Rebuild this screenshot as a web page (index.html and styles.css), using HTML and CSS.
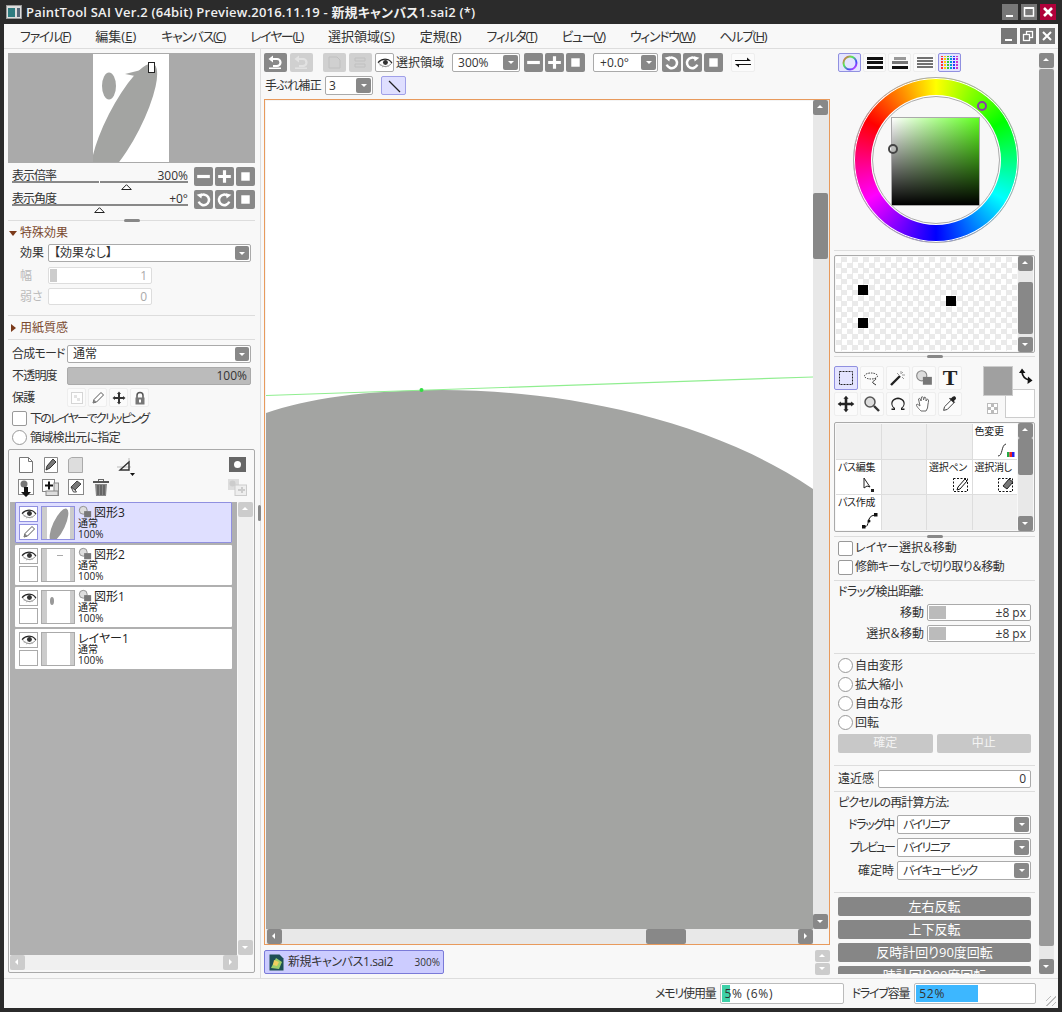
FILE: index.html
```html
<!DOCTYPE html>
<html lang="ja">
    <head>
        <meta charset="utf-8">
        <title>PaintTool SAI</title>
        <link rel="stylesheet" href="styles.css">
    </head>
    <body>
        <svg class="defs" width="0" height="0">
            <symbol id="i-minus" viewBox="0 0 18 18"><rect x="3" y="7.5" width="12" height="3" fill="#fff"/></symbol>
            <symbol id="i-plus" viewBox="0 0 18 18"><path d="M3 7.5h4.5V3h3v4.5H15v3h-4.5V15h-3v-4.5H3z" fill="#fff"/></symbol>
            <symbol id="i-stop" viewBox="0 0 18 18"><rect x="5" y="5" width="8" height="8" fill="#fff"/></symbol>
            <symbol id="i-ccw" viewBox="0 0 18 18"><path d="M6 5.5A5 5 0 1 1 4.5 11" fill="none" stroke="#fff" stroke-width="2.4"/><path d="M2.5 4.5l5-1.500-.5 5z" fill="#fff"/></symbol>
            <symbol id="i-cw" viewBox="0 0 18 18"><path d="M12 5.5A5 5 0 1 0 13.5 11" fill="none" stroke="#fff" stroke-width="2.4"/><path d="M15.500 4.500l-5-1.500.5 5z" fill="#fff"/></symbol>
            <symbol id="i-undo" viewBox="0 0 22 19"><path d="M8 6h5a3.500 3.500 0 0 1 0 7H9" fill="none" stroke="#fff" stroke-width="2.200"/><path d="M9 2.500v7L4.500 6z" fill="#fff"/><rect x="5" y="14.500" width="12" height="1.500" fill="#fff"/></symbol>
            <symbol id="i-eye" viewBox="0 0 18 16"><path d="M1.500 8C4 4.500 7 3.500 9.500 3.500S15 5 16.500 8.500C14 11 12 12 9 12S4 10.500 1.500 8z" fill="#fff" stroke="#666" stroke-width=".8"/><circle cx="9.500" cy="7.500" r="2.800" fill="#333"/><path d="M3 11l2-1.500M6 13l1-2M10 13v-1.500M13 12.500l-1-1.500" stroke="#999" stroke-width=".8"/><path d="M1 7.500C4 3.500 13 1.500 17 8" fill="none" stroke="#222" stroke-width="1.200"/></symbol>
            <symbol id="i-pencil" viewBox="0 0 16 16"><path d="M3 13l1-3.500 7-7 2.500 2.500-7 7z" fill="#fff" stroke="#555" stroke-width="1"/><path d="M3 13l1-3.500 2.500 2.500z" fill="#888"/></symbol>
            <symbol id="i-shape" viewBox="0 0 16 16"><circle cx="6" cy="6" r="4.500" fill="#ddd" stroke="#888"/><rect x="7" y="7" width="8" height="7" fill="#777"/></symbol>
            <symbol id="i-dropper" viewBox="0 0 22 22"><path d="M4 18l1-4 8-8 3 3-8 8z" fill="#fff" stroke="#333" stroke-width="1"/><path d="M12 5l2-2c2-2 5 1 3 3l-2 2 1 1-1 1-5-5 1-1z" fill="#222"/></symbol>
            <symbol id="i-thumb" viewBox="0 0 11 6"><path d="M5.500.7L10.300 5.500H.7z" fill="#fff" stroke="#222"/></symbol>
        </svg>

        <div class="titlebar">
            <svg class="app-icon" width="16" height="14" viewBox="0 0 16 14"><rect x=".5" y=".5" width="15" height="13" fill="#ddd" stroke="#999"/><rect x="2" y="3" width="7" height="9" fill="#2e7c80"/><rect x="11" y="3" width="3" height="9" fill="#567"/></svg>
            <span class="title-text">PaintTool SAI Ver.2 (64bit) Preview.2016.11.19 - 新規キャンバス1.sai2 (*)</span>
            <div class="win-buttons">
                <span class="win-btn"><svg width="16" height="16"><rect x="4" y="11" width="7" height="2" fill="#fff"/></svg></span>
                <span class="win-btn"><svg width="16" height="16"><rect x="3.500" y="4" width="9" height="8" fill="none" stroke="#fff" stroke-width="1.500"/><rect x="3" y="3" width="10" height="2" fill="#fff"/></svg></span>
                <span class="win-btn win-close"><svg width="16" height="16"><path d="M4 4l8 8M12 4l-8 8" stroke="#fff" stroke-width="2.600"/></svg></span>
            </div>
        </div>

        <div class="frame">
            <div class="menubar">
                <div class="menus">
                    <span class="kana">ファイル(<u>F</u>)</span>
                    <span>編集(<u>E</u>)</span>
                    <span class="kana">キャンバス(<u>C</u>)</span>
                    <span class="kana">レイヤー(<u>L</u>)</span>
                    <span>選択領域(<u>S</u>)</span>
                    <span>定規(<u>R</u>)</span>
                    <span class="kana">フィルタ(<u>T</u>)</span>
                    <span class="kana">ビュー(<u>V</u>)</span>
                    <span class="kana">ウィンドウ(<u>W</u>)</span>
                    <span class="kana">ヘルプ(<u>H</u>)</span>
                </div>
                <div class="mdi-buttons">
                    <span class="mdi-btn"><svg width="16" height="16"><rect x="4" y="11" width="7" height="2" fill="#fff"/></svg></span>
                    <span class="mdi-btn"><svg width="16" height="16"><rect x="6.500" y="3.500" width="6" height="6" fill="none" stroke="#fff" stroke-width="1.300"/><rect x="3.500" y="6.500" width="6" height="6" fill="#777" stroke="#fff" stroke-width="1.300"/></svg></span>
                    <span class="mdi-btn"><svg width="16" height="16"><path d="M4 4l8 8M12 4l-8 8" stroke="#fff" stroke-width="2"/></svg></span>
                </div>
            </div>

            <div class="workspace">
                <!-- Left panel -->
                <div class="left">
                    <div class="nav-preview">
                        <svg width="245" height="108" viewBox="0 0 245 108">
                            <rect width="245" height="108" fill="#aaa"/>
                            <rect x="84" width="76" height="108" fill="#fff"/>
                            <ellipse cx="100" cy="32" rx="7" ry="13.500" fill="#a3a4a2"/>
                            <clipPath id="page"><rect x="84" width="76" height="108"/></clipPath>
                            <g clip-path="url(#page)">
                                <ellipse cx="115" cy="68" rx="17" ry="65" transform="rotate(27 115 68)" fill="#a3a4a2"/>
                            </g>
                            <path d="M116 20l20-5v9z" fill="#a3a4a2"/>
                            <rect x="139.500" y="8.500" width="6" height="10" fill="#fff" stroke="#222"/>
                        </svg>
                    </div>

                    <div class="view-row">
                        <div class="slider">
                            <span class="slider-name">表示倍率</span><span>300%</span>
                            <i class="slider-notch"></i>
                            <svg class="slider-thumb thumb-zoom" width="11" height="6"><use href="#i-thumb"/></svg>
                        </div>
                        <div class="btn-group">
                            <span class="btn"><svg><use href="#i-minus"/></svg></span>
                            <span class="btn"><svg><use href="#i-plus"/></svg></span>
                            <span class="btn"><svg><use href="#i-stop"/></svg></span>
                        </div>
                    </div>
                    <div class="view-row">
                        <div class="slider">
                            <span class="slider-name">表示角度</span><span>+0°</span>
                            <svg class="slider-thumb thumb-angle" width="11" height="6"><use href="#i-thumb"/></svg>
                        </div>
                        <div class="btn-group">
                            <span class="btn"><svg><use href="#i-ccw"/></svg></span>
                            <span class="btn"><svg><use href="#i-cw"/></svg></span>
                            <span class="btn"><svg><use href="#i-stop"/></svg></span>
                        </div>
                    </div>

                    <div class="grip grip-left"></div>

                    <div class="section-title open">特殊効果</div>
                    <div class="field-row row-effect">
                        <label class="lbl-effect">効果</label>
                        <div class="select fill">【効果なし】<span class="drop"></span></div>
                    </div>
                    <div class="field-row row-disabled">
                        <label class="lbl-effect muted">幅</label>
                        <div class="spin spin-off"><i class="spin-fill"></i>1</div>
                    </div>
                    <div class="field-row row-disabled">
                        <label class="lbl-effect muted">弱さ</label>
                        <div class="spin spin-off">0</div>
                    </div>
                    <div class="sep sep-a"></div>
                    <div class="section-title closed">用紙質感</div>
                    <div class="sep sep-b"></div>

                    <div class="field-row row-blend">
                        <label class="lbl-blend">合成モード</label>
                        <div class="select fill">通常<span class="drop"></span></div>
                    </div>
                    <div class="field-row row-opacity">
                        <label class="lbl-blend">不透明度</label>
                        <div class="opacity">100%</div>
                    </div>
                    <div class="field-row row-protect">
                        <label class="lbl-blend">保護</label>
                        <div class="protect">
                            <span><svg width="12" height="12"><rect x=".5" y=".5" width="11" height="11" fill="#fff" stroke="#ccc"/><rect x="3" y="3" width="3" height="3" fill="#ddd"/><rect x="6" y="6" width="3" height="3" fill="#ddd"/></svg></span>
                            <span><svg width="16" height="16"><use href="#i-pencil"/></svg></span>
                            <span><svg width="14" height="14" viewBox="0 0 14 14"><path d="M7 .5l2 2.500H8V6h3V5l2.500 2L11 9V8H8v3h1l-2 2.500L5 11h1V8H3v1L.5 7 3 5v1h3V3H5z" fill="#333"/></svg></span>
                            <span><svg width="14" height="14" viewBox="0 0 14 14"><path d="M4 7V4.500a3 3 0 0 1 6 0V7" fill="none" stroke="#555" stroke-width="1.500"/><rect x="2.500" y="6.500" width="9" height="7" fill="#777"/><rect x="6" y="8.500" width="2" height="3" fill="#fff"/></svg></span>
                        </div>
                    </div>
                    <label class="check check-clip"><i class="box"></i><span class="clip-text">下のレイヤーでクリッピング</span></label>
                    <label class="check"><i class="box round"></i><span class="area-text">領域検出元に指定</span></label>

                    <div class="layer-panel">
                        <div class="layer-tools">
                            <div class="tool-line">
                                <svg width="16" height="16" viewBox="0 0 16 16"><path d="M1.500.5h9l4 4v11h-13z" fill="#fff" stroke="#777"/><path d="M10.500.5v4h4" fill="none" stroke="#777"/></svg>
                                <svg class="t-pen" width="16" height="16" viewBox="0 0 16 16"><path d="M1.500.5h13v15h-13z" fill="#fff" stroke="#888"/><path d="M3 13l1-4 6-7 3 3-6 6z" fill="#777" stroke="#333"/></svg>
                                <svg class="t-folder" width="16" height="16" viewBox="0 0 16 16"><path d="M.5 2.500l3-2h11v15H.500z" fill="#ddd" stroke="#aaa"/></svg>
                                <svg class="t-ruler" width="18" height="19" viewBox="0 0 18 19"><path d="M0 10h14M12 1v13M3 13l10-9" stroke="#aaa" stroke-width=".8"/><path d="M3 13L12 5v8z" fill="none" stroke="#333" stroke-width="1.300"/><path d="M13 16h5l-2.500 3z" fill="#111"/></svg>
                                <span class="t-mask"></span>
                            </div>
                            <div class="tool-line">
                                <svg width="16" height="19" viewBox="0 0 16 19"><rect x=".5" y=".5" width="15" height="15" fill="#fff" stroke="#888"/><circle cx="6" cy="5" r="3.500" fill="#777"/><path d="M6 8h4v5h3l-5 5-5-5h3z" fill="#111"/></svg>
                                <svg class="t-merge" width="17" height="17" viewBox="0 0 17 17"><rect x=".5" y=".5" width="12" height="12" fill="#fff" stroke="#111" stroke-dasharray="1 1"/><rect x="12" y="4" width="4.500" height="12.500" fill="#ddd" stroke="#888"/><rect x="4" y="12" width="12" height="4.500" fill="#ddd" stroke="#888"/><path d="M3 5.500h3v-3h2v3h3v2H8v3H6v-3H3z" fill="#111"/></svg>
                                <svg class="t-erase" width="16" height="16" viewBox="0 0 16 16"><rect x=".5" y=".5" width="15" height="15" fill="#fff" stroke="#888"/><path d="M3 8l6-6 4 3-6 6z" fill="#777" stroke="#444"/><path d="M3 8l4 3 1.500 2-3 0z" fill="#fff" stroke="#444"/></svg>
                                <svg class="t-trash" width="16" height="17" viewBox="0 0 16 17"><rect x="5.500" y=".5" width="5" height="2" fill="none" stroke="#666"/><rect x="0" y="2" width="16" height="2" fill="#555"/><path d="M2 5h12l-1 12H3z" fill="#888"/><path d="M5 6v10M8 6v10M11 6v10" stroke="#444"/></svg>
                                <svg class="t-copy" width="19" height="17" viewBox="0 0 19 17"><rect width="11" height="11" fill="#ddd"/><circle cx="4.500" cy="4.500" r="3" fill="#ccc"/><rect x="7" y="6" width="11.500" height="10.500" fill="#eee" stroke="#ccc"/><path d="M10 10h3V8h2v2h2v2h-2v2h-2v-2h-3z" fill="#ccc"/></svg>
                            </div>
                        </div>

                        <div class="layer-body">
                            <div class="layer-list">
                                <div class="layer active">
                                    <div class="layer-flags">
                                        <span class="flag"><svg width="16" height="14"><use href="#i-eye"/></svg></span>
                                        <span class="flag"><svg width="16" height="16"><use href="#i-pencil"/></svg></span>
                                    </div>
                                    <div class="thumb">
                                        <svg width="33" height="33" viewBox="0 0 33 33"><rect width="33" height="33" fill="#fff"/><rect width="5" height="33" fill="#ccc"/><rect x="28" width="5" height="33" fill="#ccc"/><ellipse cx="17" cy="18" rx="6" ry="18" transform="rotate(25 17 18)" fill="#999"/></svg>
                                    </div>
                                    <div class="layer-text">
                                        <div class="layer-name"><svg width="14" height="14"><use href="#i-shape"/></svg>図形3</div>
                                        <div class="layer-meta">通常</div>
                                        <div class="layer-meta">100%</div>
                                    </div>
                                </div>
                                <div class="layer">
                                    <div class="layer-flags">
                                        <span class="flag"><svg width="16" height="14"><use href="#i-eye"/></svg></span>
                                        <span class="flag"></span>
                                    </div>
                                    <div class="thumb">
                                        <svg width="33" height="33" viewBox="0 0 33 33"><rect width="33" height="33" fill="#fff"/><rect width="5" height="33" fill="#ccc"/><rect x="28" width="5" height="33" fill="#ccc"/><rect x="15" y="6" width="6" height="1" fill="#aaa"/></svg>
                                    </div>
                                    <div class="layer-text">
                                        <div class="layer-name"><svg width="14" height="14"><use href="#i-shape"/></svg>図形2</div>
                                        <div class="layer-meta">通常</div>
                                        <div class="layer-meta">100%</div>
                                    </div>
                                </div>
                                <div class="layer">
                                    <div class="layer-flags">
                                        <span class="flag"><svg width="16" height="14"><use href="#i-eye"/></svg></span>
                                        <span class="flag"></span>
                                    </div>
                                    <div class="thumb">
                                        <svg width="33" height="33" viewBox="0 0 33 33"><rect width="33" height="33" fill="#fff"/><rect width="5" height="33" fill="#ccc"/><rect x="28" width="5" height="33" fill="#ccc"/><ellipse cx="10" cy="10" rx="2" ry="4" fill="#999"/></svg>
                                    </div>
                                    <div class="layer-text">
                                        <div class="layer-name"><svg width="14" height="14"><use href="#i-shape"/></svg>図形1</div>
                                        <div class="layer-meta">通常</div>
                                        <div class="layer-meta">100%</div>
                                    </div>
                                </div>
                                <div class="layer">
                                    <div class="layer-flags">
                                        <span class="flag"><svg width="16" height="14"><use href="#i-eye"/></svg></span>
                                        <span class="flag"></span>
                                    </div>
                                    <div class="thumb">
                                        <svg width="33" height="33" viewBox="0 0 33 33"><rect width="33" height="33" fill="#fff"/><rect width="5" height="33" fill="#ccc"/><rect x="28" width="5" height="33" fill="#ccc"/></svg>
                                    </div>
                                    <div class="layer-text">
                                        <div class="layer-name">レイヤー1</div>
                                        <div class="layer-meta">通常</div>
                                        <div class="layer-meta">100%</div>
                                    </div>
                                </div>
                            </div>
                            <div class="sb sb-light">
                                <span class="sb-btn up"></span>
                                <span class="sb-space"></span>
                                <span class="sb-btn down"></span>
                            </div>
                        </div>
                        <div class="hbar hbar-light">
                            <span class="sb-btn left-arrow"></span>
                            <span class="sb-space"></span>
                            <span class="sb-btn right-arrow"></span>
                        </div>
                    </div>
                </div>

                <!-- Canvas column -->
                <div class="center">
                    <div class="toolbar">
                        <span class="tbtn dark"><svg width="22" height="19"><use href="#i-undo"/></svg></span>
                        <span class="tbtn faded"><svg width="22" height="19"><use href="#i-undo"/></svg></span>
                        <span class="tbtn faded gap-l"><svg width="22" height="19"><path d="M6 4h8l3 3v8H6z" fill="none" stroke="#aaa"/></svg></span>
                        <span class="tbtn faded"><svg width="22" height="19"><path d="M6 5h10v3H6zM6 11h10v3H6z" fill="none" stroke="#aaa"/></svg></span>
                        <span class="eye-btn"><svg width="16" height="14"><use href="#i-eye"/></svg></span>
                        <span class="tb-label">選択領域</span>
                        <div class="select sel-zoom">300%<span class="drop"></span></div>
                        <div class="btn-group">
                            <span class="btn"><svg><use href="#i-minus"/></svg></span>
                            <span class="btn"><svg><use href="#i-plus"/></svg></span>
                            <span class="btn"><svg><use href="#i-stop"/></svg></span>
                        </div>
                        <div class="select sel-angle">+0.0°<span class="drop"></span></div>
                        <div class="btn-group">
                            <span class="btn"><svg><use href="#i-ccw"/></svg></span>
                            <span class="btn"><svg><use href="#i-cw"/></svg></span>
                            <span class="btn"><svg><use href="#i-stop"/></svg></span>
                        </div>
                        <span class="swap-btn"><svg width="16" height="14" viewBox="0 0 16 14"><path d="M0 4h12V1.500L16 5H0zM16 9H4v2.500L0 8h16z" fill="#111"/></svg></span>
                    </div>
                    <div class="toolbar toolbar-2">
                        <span class="tb-label">手ぶれ補正</span>
                        <div class="select sel-shake">3<span class="drop"></span></div>
                        <span class="line-btn"><svg width="25" height="19"><path d="M7 4l11 11" stroke="#222" stroke-width="1.200"/></svg></span>
                    </div>

                    <div class="canvas-frame">
                        <div class="canvas-main">
                            <div class="canvas">
                                <svg width="547" height="828" viewBox="0 0 547 828">
                                    <rect width="547" height="828" fill="#fff"/>
                                    <path class="blob" d="M-8 316L0 312C40 298 100 289 175 289C290 289 440 315 547 388L556 394V840H-8z" fill="#a3a4a2"/>
                                    <path d="M0 294.500L547 276" stroke="#90ee90" stroke-width="1.200"/>
                                    <circle cx="155.500" cy="289" r="2" fill="#33dd44"/>
                                </svg>
                            </div>
                            <div class="sb sb-canvas">
                                <span class="sb-btn up"></span>
                                <span class="sb-thumb"></span>
                                <span class="sb-space"></span>
                                <span class="sb-btn down"></span>
                            </div>
                        </div>
                        <div class="hbar hbar-canvas">
                            <span class="sb-btn left-arrow"></span>
                            <span class="sb-thumb"></span>
                            <span class="sb-btn right-arrow"></span>
                        </div>
                    </div>

                    <div class="tabs">
                        <div class="tab">
                            <svg width="15" height="17" viewBox="0 0 15 17"><path d="M.5.5h10l4 4v12H.500z" fill="#1d4f55"/><path d="M2 14L7 4l6 4-3 7z" fill="#9ccf6a"/><path d="M5 6l5 2-2 4-4-1z" fill="#f0d060"/></svg>
                            <span class="tab-name">新規キャンバス1.sai2</span>
                            <span class="tab-zoom">300%</span>
                        </div>
                        <div class="tab-scroll">
                            <span class="sb-btn up"></span>
                            <span class="sb-btn down"></span>
                        </div>
                    </div>
                </div>

                <!-- Right panel -->
                <div class="right">
                    <div class="right-body">
                        <div class="color-tabs">
                            <span class="ctab on"><svg width="18" height="18" viewBox="0 0 18 18"><linearGradient id="ringstroke" x1="0" y1="0" x2="1" y2="1"><stop offset="0" stop-color="#f44"/><stop offset=".35" stop-color="#5e5"/><stop offset=".7" stop-color="#44f"/><stop offset="1" stop-color="#f4f"/></linearGradient><circle cx="9" cy="9" r="6.500" fill="none" stroke="url(#ringstroke)" stroke-width="2"/></svg></span>
                            <span class="ctab"><svg width="16" height="12"><rect width="16" height="3" fill="#111"/><rect y="4" width="16" height="3" fill="#111"/><rect y="9" width="16" height="3" fill="#111"/></svg></span>
                            <span class="ctab"><svg width="16" height="12"><rect x="2" width="12" height="3" fill="#999"/><rect y="4" width="16" height="3" fill="#777"/><rect y="9" width="16" height="3" fill="#111"/></svg></span>
                            <span class="ctab"><svg width="16" height="12"><path d="M0 1h16M0 4h16M0 7h16M0 10h16" stroke="#444" stroke-width="1.400"/></svg></span>
                            <span class="ctab on"><i class="palette-dots"></i></span>
                        </div>

                        <div class="wheel">
                            <div class="wheel-ring"></div>
                            <div class="wheel-inner"></div>
                            <div class="wheel-square"></div>
                            <i class="knob knob-hue"></i>
                            <i class="knob knob-sv"></i>
                        </div>
                        <div class="sep sep-wheel"></div>

                        <div class="swatches">
                            <div class="swatch-grid">
                                <i class="sw sw1"></i><i class="sw sw2"></i><i class="sw sw3"></i>
                            </div>
                            <div class="sb sb-small">
                                <span class="sb-btn up"></span>
                                <span class="sb-gap"></span>
                                <span class="sb-thumb sw-thumb"></span>
                                <span class="sb-space"></span>
                                <span class="sb-btn down"></span>
                            </div>
                        </div>
                        <div class="grip grip-swatch"></div>

                        <div class="tools-row">
                            <div class="tool-grid">
                                <span class="tool on"><svg width="20" height="20"><rect x="3.500" y="3.500" width="13" height="13" fill="none" stroke="#222" stroke-dasharray="2 1"/></svg></span>
                                <span class="tool"><svg width="20" height="20"><ellipse cx="9" cy="8" rx="6.500" ry="3" fill="none" stroke="#333" stroke-dasharray="1.500 1"/><path d="M13 10c3 2-4 3-2 5l3 2" fill="none" stroke="#333"/></svg></span>
                                <span class="tool"><svg width="20" height="20"><path d="M3 17l9-9" stroke="#222" stroke-width="2.400"/><path d="M13 3v3M17 7h-3M15 4l-1.500 1.500M16 11l-2-2M9 5l2 2" stroke="#999"/></svg></span>
                                <span class="tool"><svg width="18" height="18"><use href="#i-shape"/></svg></span>
                                <span class="tool tool-t">T</span>
                                <span class="tool"><svg width="18" height="18" viewBox="0 0 14 14"><path d="M7 .5l2 2.500H8V6h3V5l2.500 2L11 9V8H8v3h1l-2 2.500L5 11h1V8H3v1L.5 7 3 5v1h3V3H5z" fill="#222"/></svg></span>
                                <span class="tool"><svg width="20" height="20"><circle cx="8" cy="8" r="5" fill="#ddd" stroke="#555" stroke-width="1.500"/><path d="M12 12l5 5" stroke="#333" stroke-width="2.400"/></svg></span>
                                <span class="tool"><svg width="20" height="20"><path d="M7 16H3.500v-1.500H6C3 12 2.500 8.500 4.500 6c3-3.500 8-3.500 11 0 2 2.500 1.500 6-1.500 8.500h2.500V16H13v-2c2.500-1.500 3.500-4.500 1.500-7-2-2.500-7-2.500-9 0-2 2.500-1 5.500 1.500 7z" fill="#222"/></svg></span>
                                <span class="tool"><svg width="20" height="20"><path d="M7 17C5 15 2 12 2.500 10.500c1-1 2.500 1 3.500 1.500L4.500 5c1-1.500 2 0 2.500 2l.5-4c1.500-1 2 .5 2 3l1-3c1.500 0 1.500 2 1.500 4l1.500-2c1.500.5 1 3 .5 5l-.5 4-1.500 3z" fill="#fff" stroke="#666"/></svg></span>
                                <span class="tool"><svg width="20" height="20"><use href="#i-dropper"/></svg></span>
                            </div>
                            <div class="color-pair">
                                <i class="col-bg"></i>
                                <i class="col-fg"></i>
                                <svg class="col-swap" width="15" height="17" viewBox="0 0 15 17"><path d="M4 4c.5 4 3 7 7 8" fill="none" stroke="#111" stroke-width="1.800"/><path d="M1 5l3-4.500L7.500 5zM10 8.500l4.500 4-5 3.500z" fill="#111"/></svg>
                                <i class="col-clear"></i>
                            </div>
                        </div>

                        <div class="brushes">
                            <div class="brush-grid">
                                <div class="cell"></div><div class="cell"></div><div class="cell"></div>
                                <div class="cell filled"><span>色変更</span><svg width="18" height="16" viewBox="0 0 18 16"><path d="M1 14c5 0 3-11 8-12" fill="none" stroke="#333"/><rect x="10" y="10" width="2.500" height="5" fill="#2a4"/><rect x="12.500" y="10" width="2.500" height="5" fill="#e22"/><rect x="15" y="10" width="2.500" height="5" fill="#22e"/></svg></div>
                                <div class="cell filled"><span>パス編集</span><svg width="18" height="16" viewBox="0 0 18 16"><path d="M3 1v10l3-2 3 1z" fill="#fff" stroke="#222"/><rect x="10" y="12" width="3" height="3" fill="#222"/></svg></div>
                                <div class="cell"></div>
                                <div class="cell filled"><span>選択ペン</span><svg width="18" height="16" viewBox="0 0 18 16"><rect x="1.500" y="1.500" width="14" height="13" fill="none" stroke="#111" stroke-dasharray="2 1.500"/><path d="M5 13l1-3 7-8 2 2-7 8z" fill="#fff" stroke="#111"/></svg></div>
                                <div class="cell filled"><span>選択消し</span><svg width="18" height="16" viewBox="0 0 18 16"><rect x="1.500" y="1.500" width="14" height="13" fill="none" stroke="#111" stroke-dasharray="2 1.500"/><path d="M6 9l6-7 4 3-6 7z" fill="#777" stroke="#222"/></svg></div>
                                <div class="cell filled"><span>パス作成</span><svg width="18" height="16" viewBox="0 0 18 16"><path d="M3 14c7 0 1-11 11-12" fill="none" stroke="#111"/><rect x="1" y="12" width="3.500" height="3.500" fill="#111"/><rect x="13" y="0" width="3.500" height="3.500" fill="#111"/><circle cx="8" cy="8" r="1.500" fill="#111"/></svg></div>
                                <div class="cell"></div><div class="cell"></div><div class="cell"></div>
                            </div>
                            <div class="sb sb-small sb-brush">
                                <span class="sb-btn up"></span>
                                <span class="sb-thumb br-thumb"></span>
                                <span class="sb-space"></span>
                                <span class="sb-btn down"></span>
                            </div>
                        </div>
                        <div class="grip grip-brush"></div>

                        <label class="check check-r"><i class="box"></i><span>レイヤー選択＆移動</span></label>
                        <label class="check check-r"><i class="box"></i><span class="mod-text">修飾キーなしで切り取り＆移動</span></label>
                        <div class="sep sep-r1"></div>

                        <div class="heading drag-title">ドラッグ検出距離:</div>
                        <div class="kv-row">
                            <label>移動</label>
                            <div class="spin spin-px"><i class="spin-fill px"></i>±8 px</div>
                        </div>
                        <div class="kv-row">
                            <label>選択＆移動</label>
                            <div class="spin spin-px"><i class="spin-fill px"></i>±8 px</div>
                        </div>
                        <div class="sep sep-r2"></div>

                        <label class="check check-t"><i class="box round"></i>自由変形</label>
                        <label class="check check-t"><i class="box round"></i>拡大縮小</label>
                        <label class="check check-t"><i class="box round"></i>自由な形</label>
                        <label class="check check-t"><i class="box round"></i>回転</label>
                        <div class="confirm-row">
                            <span class="pale-btn">確定</span>
                            <span class="pale-btn">中止</span>
                        </div>
                        <div class="sep sep-r3"></div>

                        <div class="persp-row">
                            <label>遠近感</label>
                            <div class="spin spin-persp">0</div>
                        </div>
                        <div class="sep sep-r4"></div>

                        <div class="heading heading-2">ピクセルの再計算方法:</div>
                        <div class="kv-row sel-row">
                            <label class="lbl-drag">ドラッグ中</label>
                            <div class="select fill narrow">バイリニア<span class="drop"></span></div>
                        </div>
                        <div class="kv-row sel-row">
                            <label class="lbl-preview">プレビュー</label>
                            <div class="select fill narrow">バイリニア<span class="drop"></span></div>
                        </div>
                        <div class="kv-row sel-row">
                            <label>確定時</label>
                            <div class="select fill narrow">バイキュービック<span class="drop"></span></div>
                        </div>
                        <div class="sep sep-r5"></div>

                        <div class="action-btn">左右反転</div>
                        <div class="action-btn">上下反転</div>
                        <div class="action-btn">反時計回り90度回転</div>
                        <div class="action-btn">時計回り90度回転</div>
                    </div>

                    <div class="sb sb-outer">
                        <span class="sb-btn up"></span>
                        <span class="sb-thumb outer-thumb"></span>
                        <span class="sb-space"></span>
                        <span class="sb-btn down"></span>
                    </div>
                </div>
            </div>

            <div class="statusbar">
                <span class="st-label">メモリ使用量</span>
                <div class="meter meter-mem"><i class="meter-fill"></i><span>5% (6%)</span></div>
                <span class="st-label st-drive">ドライブ容量</span>
                <div class="meter meter-drive"><i class="meter-fill"></i><span>52%</span></div>
                <span class="resize-grip"></span>
            </div>
        </div>
    </body>
</html>
```

FILE: styles.css
```css
* {
    box-sizing: border-box;
}

body {
    margin: 0;
    width: 1062px;
    height: 1012px;
    overflow: hidden;
    background: #2b2b2b;
    color: #333;
    font-family: "Open Sans", "Noto Sans CJK JP", sans-serif;
    font-size: 12px;
    line-height: 16px;
    font-feature-settings: "palt";
}

i {
    display: block;
}

svg {
    display: block;
    flex: none;
}

label {
    display: block;
}

.defs {
    position: absolute;
}

/* Title bar */
.titlebar {
    height: 24px;
    display: flex;
    align-items: center;
    padding-left: 6px;
}

.title-text {
    margin-left: 4px;
    color: #f0f0f0;
    font-weight: 600;
    font-size: 13px;
    letter-spacing: 0.2px;
}

.win-buttons {
    margin-left: auto;
    margin-right: 6px;
    display: flex;
    gap: 3px;
}

.win-btn {
    width: 16px;
    height: 16px;
    background: #777;
}

.win-close {
    background: #b0003a;
}

/* Main frame */
.frame {
    margin: 0 4px;
    height: 984px;
    background: #f8f8f8;
    display: flex;
    flex-direction: column;
}

.menubar {
    height: 25px;
    flex: none;
    display: flex;
    align-items: center;
    border-bottom: 1px solid #ddd;
}

.menus {
    display: flex;
    gap: 25px;
    padding-left: 16px;
    font-size: 13px;
}

.menus .kana {
    letter-spacing: -1.3px;
}

.mdi-buttons {
    margin-left: auto;
    margin-right: 3px;
    display: flex;
    gap: 3px;
}

.mdi-btn {
    width: 16px;
    height: 16px;
    background: #777;
}

.workspace {
    flex: 1;
    display: flex;
    min-height: 0;
}

/* Shared controls */
.btn-group {
    display: flex;
    gap: 2px;
}

.btn {
    width: 19px;
    height: 19px;
    background: #888;
    border-radius: 2px;
}

.btn svg {
    width: 19px;
    height: 19px;
}

.select {
    position: relative;
    height: 19px;
    background: #fff;
    border: 1px solid #aaa;
    border-radius: 2px;
    padding-left: 5px;
    line-height: 17px;
    white-space: nowrap;
}

.fill {
    flex: 1;
}

.narrow {
    letter-spacing: -1.6px;
}

.drop {
    position: absolute;
    right: 1px;
    top: 1px;
    width: 15px;
    height: 15px;
    background: #888;
    border-radius: 2px;
}

.drop::after {
    content: "";
    position: absolute;
    left: 5px;
    top: 6px;
    border: 3px solid transparent;
    border-top: 3px solid #fff;
}

.spin {
    position: relative;
    height: 18px;
    background: #fff;
    border: 1px solid #aaa;
    border-radius: 2px;
    text-align: right;
    padding-right: 4px;
    line-height: 16px;
}

.spin-off {
    width: 104px;
    height: 17px;
    line-height: 15px;
    border-color: #ddd;
    color: #aaa;
}

.spin-fill {
    position: absolute;
    left: 1px;
    top: 1px;
    bottom: 1px;
    width: 7px;
    background: #ccc;
}

.spin-fill.px {
    width: 17px;
    background: #bbb;
}

.sep {
    height: 1px;
    background: #ddd;
}

.grip {
    position: relative;
    height: 1px;
    background: #ddd;
}

.grip::after {
    content: "";
    position: absolute;
    left: 50%;
    top: -1px;
    width: 16px;
    height: 3px;
    margin-left: -8px;
    border-radius: 2px;
    background: #888;
}

.check {
    display: flex;
    align-items: center;
    gap: 2px;
    height: 19px;
    padding-left: 4px;
}

.box {
    width: 15px;
    height: 15px;
    background: #fff;
    border: 1px solid #999;
    border-radius: 2px;
    flex: none;
}

.box.round {
    border-radius: 50%;
}

/* Scrollbars */
.sb {
    width: 15px;
    flex: none;
    display: flex;
    flex-direction: column;
    background: #e8e8e8;
}

.hbar {
    height: 15px;
    flex: none;
    display: flex;
    background: #e8e8e8;
}

.sb-btn {
    position: relative;
    display: block;
    width: 15px;
    height: 15px;
    flex: none;
    background: #888;
    border-radius: 2px;
}

.sb-btn::after {
    content: "";
    position: absolute;
    left: 4px;
    top: 4px;
    border: 3px solid transparent;
}

.sb-btn.up::after {
    top: 2px;
    border-bottom-color: #fff;
}

.sb-btn.down::after {
    top: 6px;
    border-top-color: #fff;
}

.sb-btn.left-arrow::after {
    left: 2px;
    top: 4px;
    border-right-color: #fff;
}

.sb-btn.right-arrow::after {
    left: 6px;
    top: 4px;
    border-left-color: #fff;
}

.sb-space {
    flex: 1;
}

.sb-thumb {
    display: block;
    background: #888;
    border-radius: 2px;
}

.sb-light .sb-btn,
.hbar-light .sb-btn,
.tab-scroll .sb-btn {
    background: #ccc;
}

/* Left panel */
.left {
    width: 257px;
    flex: none;
    padding: 4px 5px 0 4px;
    border-right: 1px solid #ddd;
    position: relative;
}

.left::after {
    content: "";
    position: absolute;
    right: -1px;
    top: 456px;
    width: 3px;
    height: 16px;
    border-radius: 2px;
    background: #888;
}

.nav-preview {
    height: 110px;
    border: 1px solid #aaa;
    overflow: hidden;
}

.view-row {
    display: flex;
    margin-top: 4px;
    height: 19px;
}

.slider {
    position: relative;
    width: 176px;
    height: 16px;
    margin-left: 4px;
    margin-right: 6px;
    display: flex;
    justify-content: space-between;
    border-bottom: 2px solid #888;
    line-height: 18px;
}

.slider-name {
    letter-spacing: -1px;
}

.slider-notch {
    position: absolute;
    left: 87px;
    top: 14px;
    width: 1px;
    height: 2px;
    background: #fff;
}

.slider-thumb {
    position: absolute;
    top: 17px;
}

.thumb-zoom {
    left: 109px;
}

.thumb-angle {
    left: 82px;
}

.grip-left {
    margin-top: 11px;
}

.section-title {
    height: 14px;
    line-height: 14px;
    padding-left: 12px;
    position: relative;
    color: #7b4a30;
}

.section-title.open {
    margin-top: 5px;
}

.section-title.closed {
    margin-top: 4px;
    height: 16px;
    line-height: 16px;
}

.section-title::before {
    content: "";
    position: absolute;
    left: 1px;
    top: 5px;
    border: 4px solid transparent;
}

.section-title.open::before {
    top: 5px;
    border-top: 5px solid #7b3a1a;
}

.section-title.closed::before {
    left: 3px;
    top: 4px;
    border-left: 5px solid #7b3a1a;
}

.field-row {
    display: flex;
    align-items: center;
}

.left .field-row {
    padding-right: 4px;
}

.left .select {
    height: 18px;
    line-height: 16px;
}

.left .drop {
    width: 14px;
    height: 14px;
}

.left .drop::after {
    left: 4px;
}

.row-effect {
    margin-top: 4px;
    height: 18px;
}

.row-disabled {
    margin-top: 5px;
    height: 17px;
}

.row-disabled + .row-disabled {
    margin-top: 4px;
}

.lbl-effect {
    width: 40px;
    padding-left: 12px;
}

.muted {
    color: #bbb;
}

.sep-a {
    margin-top: 10px;
}

.sep-b {
    margin-top: 3px;
}

.row-blend {
    margin-top: 5px;
    height: 18px;
}

.row-opacity {
    margin-top: 4px;
    height: 18px;
}

.row-protect {
    margin-top: 3px;
    height: 19px;
}

.lbl-blend {
    width: 59px;
    padding-left: 4px;
    white-space: nowrap;
    letter-spacing: -0.8px;
}

.opacity {
    flex: 1;
    height: 18px;
    background: #bbb;
    border: 1px solid #aaa;
    border-radius: 2px;
    text-align: right;
    padding-right: 3px;
    line-height: 16px;
}

.protect {
    display: flex;
    gap: 2px;
}

.protect span {
    width: 19px;
    height: 19px;
    background: #fbfbfb;
    border: 1px solid #eee;
    border-radius: 2px;
    display: flex;
    align-items: center;
    justify-content: center;
}

.protect span:first-child svg {
    opacity: 0.8;
}

.check-clip {
    margin-top: 2px;
}

.left .check {
    gap: 3px;
}

.clip-text {
    letter-spacing: -1.7px;
}

.area-text {
    letter-spacing: -0.7px;
}

/* Layer panel */
.layer-panel {
    margin-top: 2px;
    width: 247px;
    height: 524px;
    border: 1px solid #aaa;
    border-radius: 2px;
    display: flex;
    flex-direction: column;
}

.layer-tools {
    height: 52px;
    flex: none;
    padding: 7px 0 0 9px;
}

.tool-line {
    display: flex;
    align-items: flex-start;
    height: 22px;
}

.t-pen {
    margin-left: 9px;
}

.t-folder {
    margin-left: 9px;
}

.t-ruler {
    margin-left: 33px;
}

.t-mask {
    position: relative;
    margin-left: 94px;
    width: 17px;
    height: 15px;
    background: #666;
}

.t-mask::after {
    content: "";
    position: absolute;
    left: 5px;
    top: 4px;
    width: 7px;
    height: 7px;
    border-radius: 50%;
    background: #fff;
}

.t-merge {
    margin-left: 8px;
}

.t-erase {
    margin-left: 9px;
}

.t-trash {
    margin-left: 9px;
}

.t-copy {
    margin-left: 119px;
}

.layer-body {
    flex: 1;
    min-height: 0;
    display: flex;
}

.layer-list {
    flex: 1;
    background: #b0b0b0;
    padding: 0 5px;
    display: flex;
    flex-direction: column;
    gap: 2px;
    margin-left: 1px;
}

.sb-light {
    margin-left: 1px;
    width: 15px;
    background: #f0f0f0;
    margin-right: 1px;
}

.hbar-light {
    background: #f0f0f0;
    margin: 0 16px 2px 1px;
    justify-content: space-between;
}

.layer {
    height: 40px;
    background: #fff;
    padding: 3px 4px 0 4px;
    display: flex;
    border-radius: 1px;
    flex: none;
}

.layer.active {
    height: 41px;
    background: #dfdfff;
    border: 1px solid #9090e0;
    padding: 3px 3px 0 3px;
}

.layer-flags {
    display: flex;
    flex-direction: column;
    gap: 2px;
}

.flag {
    width: 19px;
    height: 16px;
    background: #fff;
    border: 1px solid #aaa;
    display: flex;
    align-items: center;
    justify-content: center;
}

.active .flag {
    border-color: #9090e0;
}

.thumb {
    width: 34px;
    height: 34px;
    margin-left: 3px;
    border: 1px solid #aaa;
    overflow: hidden;
    background: #fff;
}

.active .thumb {
    border-color: #9090e0;
}

.layer-text {
    margin-left: 3px;
    font-size: 10px;
    line-height: 11px;
    color: #222;
}

.layer-name {
    display: flex;
    align-items: center;
    gap: 2px;
    font-size: 12px;
    height: 12px;
}

/* Canvas column */
.center {
    width: 573px;
    flex: none;
    padding: 4px 3px 0 3px;
    display: flex;
    flex-direction: column;
}

.toolbar {
    display: flex;
    align-items: center;
    height: 19px;
}

.toolbar-2 {
    margin-top: 4px;
}

.tbtn {
    width: 23px;
    height: 19px;
    margin-right: 3px;
    border-radius: 2px;
}

.tbtn.dark {
    background: #888;
}

.tbtn.faded {
    background: #d0d0d0;
}

.tbtn.faded svg {
    opacity: 0.4;
}

.gap-l {
    margin-left: 7px;
}

.eye-btn {
    width: 19px;
    height: 19px;
    background: #fff;
    border: 1px solid #aaa;
    border-radius: 2px;
    display: flex;
    align-items: center;
    justify-content: center;
}

.tb-label {
    margin-left: 2px;
    white-space: nowrap;
}

.sel-zoom {
    width: 68px;
    margin-left: 8px;
    margin-right: 4px;
}

.sel-angle {
    width: 65px;
    margin-left: 8px;
    margin-right: 4px;
    padding-left: 6px;
}

.swap-btn {
    width: 24px;
    height: 19px;
    margin-left: 8px;
    background: #fbfbfb;
    border: 1px solid #eee;
    border-radius: 2px;
    display: flex;
    align-items: center;
    justify-content: center;
}

.toolbar-2 .tb-label {
    margin-left: 1px;
    width: 55px;
    letter-spacing: -0.7px;
}

.sel-shake {
    width: 48px;
    margin-left: 5px;
    padding-left: 3px;
}

.line-btn {
    width: 25px;
    height: 19px;
    margin-left: 8px;
    background: #dfdfff;
    border: 1px solid #a0a0e8;
    border-radius: 2px;
}

.canvas-frame {
    margin-top: 4px;
    width: 566px;
    height: 846px;
    border: 1px solid #e89a5c;
    background: #f4f4f4;
    display: flex;
    flex-direction: column;
    flex: none;
}

.canvas-main {
    flex: 1;
    display: flex;
    min-height: 0;
    background: #e8e8e8;
}

.canvas {
    width: 548px;
    padding: 1px 0 0 1px;
    overflow: hidden;
    background: #f4f4f4;
}

.blob {
    filter: blur(0.7px);
}

.sb-canvas .sb-thumb {
    height: 66px;
    margin-top: 78px;
}

.hbar-canvas {
    width: 547px;
    margin-left: 1px;
    padding-left: 1px;
}

.hbar-canvas .sb-thumb {
    width: 40px;
    margin-left: 364px;
    margin-right: 112px;
}

.tabs {
    margin-top: 5px;
    height: 24px;
    display: flex;
    justify-content: space-between;
    width: 566px;
}

.tab {
    width: 180px;
    height: 24px;
    background: #ccccff;
    border: 1px solid #7a7ad8;
    border-radius: 2px;
    display: flex;
    align-items: center;
    padding-left: 4px;
}

.tab-name {
    margin-left: 4px;
    white-space: nowrap;
    letter-spacing: -0.4px;
}

.tab-zoom {
    margin-left: auto;
    margin-right: 3px;
    font-size: 10px;
}

.tab-scroll {
    display: flex;
    flex-direction: column;
    gap: 1px;
}

.tab-scroll .sb-btn {
    height: 12px;
}

.tab-scroll .sb-btn.up::after {
    top: 1px;
}

.tab-scroll .sb-btn.down::after {
    top: 4px;
}

/* Right panel */
.right {
    flex: 1;
    display: flex;
}

.right-body {
    width: 201px;
    height: 925px;
    flex: none;
    overflow: hidden;
    padding-top: 4px;
}

.color-tabs {
    display: flex;
    gap: 2px;
    margin-left: 4px;
    height: 19px;
}

.ctab {
    width: 23px;
    height: 19px;
    background: #fbfbfb;
    border: 1px solid #eee;
    border-radius: 2px;
    display: flex;
    align-items: center;
    justify-content: center;
}

.ctab.on {
    background: #e4e4ff;
    border-color: #9090e0;
}

.palette-dots {
    width: 17px;
    height: 13px;
    background:
        repeating-linear-gradient(0deg, transparent 0 2px, #e4e4ff 2px 3px),
        repeating-linear-gradient(90deg, #f33 0 2px, #e4e4ff 2px 3px, #fc0 3px 5px, #e4e4ff 5px 6px, #3c3 6px 8px, #e4e4ff 8px 9px, #09c 9px 11px, #e4e4ff 11px 12px, #33f 12px 14px, #e4e4ff 14px 15px, #c3c 15px 17px);
}

.wheel {
    position: relative;
    width: 166px;
    height: 166px;
    margin: 5px 0 0 19px;
}

.wheel-ring {
    width: 166px;
    height: 166px;
    border-radius: 50%;
    border: 1px solid #aaa;
    box-shadow: inset 0 0 0 1px #fff;
    background: conic-gradient(#ff0, #0f0, #0ff, #00f, #f0f, #f00, #ff0);
}

.wheel-inner {
    position: absolute;
    left: 19px;
    top: 19px;
    width: 128px;
    height: 128px;
    border-radius: 50%;
    background: #f8f8f8;
    border: 1px solid #aaa;
    box-shadow: 0 0 0 1px #fff;
}

.wheel-square {
    position: absolute;
    left: 38px;
    top: 40px;
    width: 89px;
    height: 89px;
    border: 1px solid #aaa;
    background:
        linear-gradient(to top, #000, rgba(0, 0, 0, 0)),
        linear-gradient(to right, #fff, #60ff20);
}

.knob {
    position: absolute;
    width: 10px;
    height: 10px;
    border-radius: 50%;
    border: 2px solid #8a3aa8;
}

.knob-hue {
    left: 124px;
    top: 24px;
}

.knob-sv {
    left: 35px;
    top: 67px;
    border-color: #444;
    background: rgba(255, 255, 255, 0.25);
}

.sep-wheel {
    margin-top: 7px;
}

.swatches {
    margin-top: 4px;
    height: 98px;
    border: 1px solid #aaa;
    border-radius: 2px;
    display: flex;
}

.swatch-grid {
    position: relative;
    flex: 1;
    margin: 1px;
    background:
        repeating-conic-gradient(#eaeaea 0 25%, #fff 0 50%) 0 0 / 11px 11px;
}

.sw {
    position: absolute;
    width: 10px;
    height: 10px;
    background: #000;
}

.sw1 {
    left: 22px;
    top: 28px;
}

.sw2 {
    left: 110px;
    top: 39px;
}

.sw3 {
    left: 22px;
    top: 61px;
}

.sb-small {
    margin: 0 1px 0 0;
}

.sb-gap {
    height: 11px;
}

.sw-thumb {
    height: 52px;
}

.grip-swatch {
    margin-top: 3px;
}

.tools-row {
    margin-top: 9px;
    position: relative;
    height: 52px;
}

.tool-grid {
    display: grid;
    grid-template-columns: repeat(5, 24px);
    grid-auto-rows: 24px;
    gap: 2px;
}

.tool {
    display: flex;
    align-items: center;
    justify-content: center;
    background: #fbfbfb;
    border: 1px solid #eee;
    border-radius: 2px;
}

.tool.on {
    background: #e4e4ff;
    border-color: #9090e0;
}

.tool-t {
    font-family: "Liberation Serif", serif;
    font-weight: bold;
    font-size: 22px;
    color: #222;
}

.color-pair {
    position: absolute;
    left: 148px;
    top: 0;
    width: 53px;
    height: 52px;
}

.col-bg {
    position: absolute;
    right: 0;
    bottom: 0;
    width: 30px;
    height: 29px;
    background: #fff;
    border: 1px solid #ccc;
}

.col-fg {
    position: absolute;
    left: 1px;
    top: 0;
    width: 30px;
    height: 30px;
    background: #a0a0a0;
    border: 1px solid #ccc;
}

.col-swap {
    position: absolute;
    right: 2px;
    top: 2px;
}

.col-clear {
    position: absolute;
    left: 5px;
    top: 37px;
    width: 11px;
    height: 11px;
    border: 1px solid #bbb;
    background: repeating-conic-gradient(#bbb 0 25%, #fff 0 50%) 0 0 / 6px 6px;
}

.brushes {
    margin-top: 4px;
    height: 110px;
    border: 1px solid #aaa;
    border-radius: 2px;
    display: flex;
}

.brush-grid {
    flex: 1;
    margin: 1px;
    display: grid;
    grid-template-columns: repeat(4, 1fr);
    grid-template-rows: repeat(3, 1fr);
    gap: 1px;
    background: #ddd;
}

.cell {
    position: relative;
    background: #f0f0f0;
}

.cell.filled {
    background: #fff;
}

.cell span {
    position: absolute;
    left: 2px;
    top: 1px;
    font-size: 10px;
    line-height: 12px;
    white-space: nowrap;
    color: #222;
    letter-spacing: -0.3px;
}

.cell svg {
    position: absolute;
    right: 2px;
    bottom: 1px;
}

.sw-thumb,
.br-thumb {
    flex: none;
}

.br-thumb {
    height: 37px;
}

.grip-brush {
    margin-top: 4px;
}

.check-r {
    margin-top: 2px;
    height: 18px;
}

.check-r + .check-r {
    margin-top: 1px;
}

.mod-text {
    letter-spacing: -0.6px;
}

.sep-r1 {
    margin-top: 4px;
}

.heading {
    margin-top: 3px;
    padding-left: 4px;
    height: 16px;
}

.drag-title {
    letter-spacing: -0.7px;
}

.kv-row {
    display: flex;
    align-items: center;
    margin-top: 4px;
    height: 17px;
}

.kv-row label {
    width: 93px;
    text-align: right;
    padding-right: 3px;
    white-space: nowrap;
}

.spin-px {
    width: 104px;
    height: 17px;
    line-height: 15px;
}

.sep-r2 {
    margin-top: 11px;
}

.check-t {
    height: 19px;
}

.sep-r2 + .check-t {
    margin-top: 2px;
}

.confirm-row {
    margin-top: 2px;
    display: flex;
    gap: 4px;
    padding: 0 4px;
}

.pale-btn {
    flex: 1;
    height: 19px;
    background: #c8c8c8;
    border-radius: 2px;
    color: #f4f4f4;
    text-align: center;
    line-height: 18px;
}

.sep-r3 {
    margin-top: 12px;
}

.persp-row {
    display: flex;
    align-items: center;
    margin-top: 4px;
    height: 18px;
    padding-left: 4px;
}

.persp-row label {
    width: 40px;
    white-space: nowrap;
}

.spin-persp {
    width: 153px;
    height: 18px;
}

.sep-r4 {
    margin-top: 3px;
}

.heading-2 {
    letter-spacing: -0.8px;
}

.sel-row {
    height: 19px;
    padding-right: 4px;
}

.sel-row label {
    width: 63px;
}

.sel-row .lbl-drag {
    letter-spacing: -1.2px;
}

.sel-row .lbl-preview {
    letter-spacing: -2px;
}

.sep-r5 {
    margin-top: 12px;
}

.action-btn {
    margin: 4px 4px 0 4px;
    height: 19px;
    background: #868686;
    border-radius: 2px;
    color: #fff;
    text-align: center;
    line-height: 18px;
    font-size: 13px;
}

.sb-outer {
    margin: 4px 0 0 4px;
    height: 921px;
    background: #e8e8e8;
}

.outer-thumb {
    height: 877px;
    margin-top: 1px;
    background: #999;
}

/* Status bar */
.statusbar {
    position: relative;
    height: 30px;
    flex: none;
    border-top: 1px solid #ddd;
    display: flex;
    align-items: center;
    padding-left: 651px;
}

.st-label {
    white-space: nowrap;
    letter-spacing: -1.2px;
}

.meter {
    position: relative;
    height: 21px;
    background: #fff;
    border: 1px solid #bbb;
    border-radius: 2px;
    line-height: 19px;
    flex: none;
}

.meter-mem {
    width: 124px;
    margin-left: 4px;
}

.meter-drive {
    width: 122px;
    margin-left: 5px;
}

.st-drive {
    margin-left: 8px;
}

.meter-fill {
    position: absolute;
    left: 1px;
    top: 1px;
    bottom: 1px;
}

.meter-mem .meter-fill {
    width: 8px;
    background: #3fd0a8;
}

.meter-drive .meter-fill {
    width: 62px;
    background: #3db7ff;
}

.meter span {
    position: relative;
    padding-left: 4px;
    letter-spacing: 0.7px;
}

.resize-grip {
    position: absolute;
    right: 2px;
    bottom: 2px;
    width: 10px;
    height: 10px;
    background: repeating-linear-gradient(135deg, transparent 0 3px, #bbb 3px 4px);
}
```
